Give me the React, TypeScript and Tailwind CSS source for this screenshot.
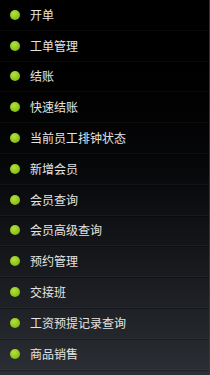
const items = [
  "开单",
  "工单管理",
  "结账",
  "快速结账",
  "当前员工排钟状态",
  "新增会员",
  "会员查询",
  "会员高级查询",
  "预约管理",
  "交接班",
  "工资预提记录查询",
  "商品销售",
]

export default function App() {
  return (
    <div
      className="w-[210px] h-[375px] overflow-hidden bg-gradient-to-b from-[#000000] to-[#2b2e34] border-r border-[#33363c]"
      style={{ fontFamily: '"Noto Sans CJK SC", "Noto Sans", sans-serif' }}
    >
      {items.map((label) => (
        <div
          key={label}
          className="h-[30.8px] flex items-center border-b border-[#ffffff0a] shadow-[0_1px_0_rgba(0,0,0,0.3)]"
        >
          <span className="ml-[10px] w-[10px] h-[10px] rounded-full bg-[radial-gradient(circle_at_40%_35%,#b4e23c,#8cc41a_60%,#6a9a10)] shrink-0" />
          <span className="ml-[10px] text-[12px] leading-none text-[#e4e4e4]">{label}</span>
        </div>
      ))}
    </div>
  )
}
